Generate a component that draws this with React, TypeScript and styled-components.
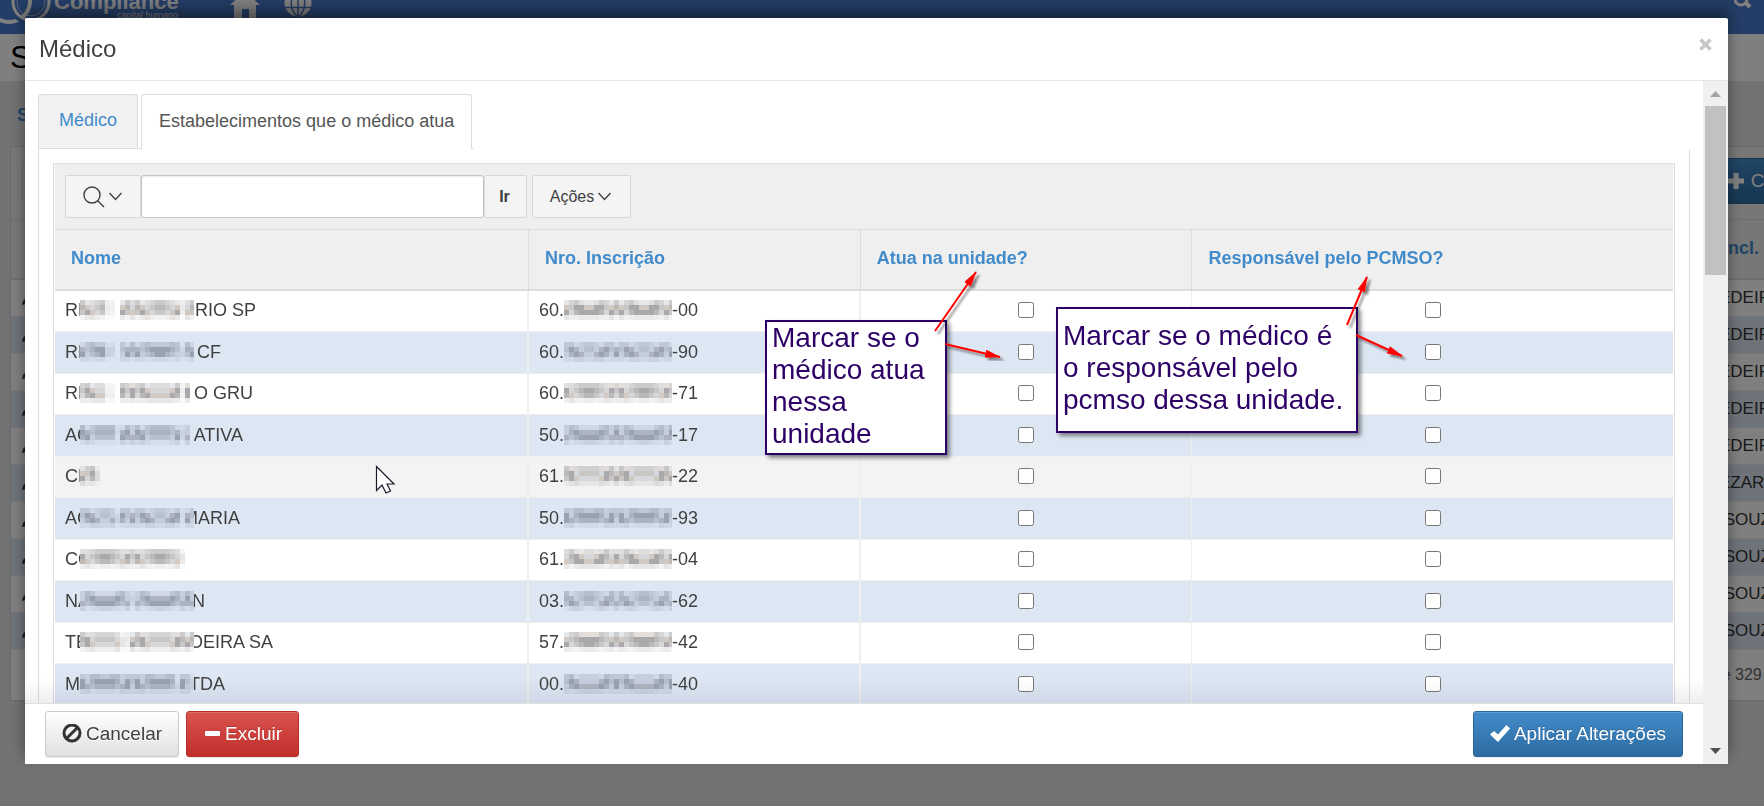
import React from "react";
import styled, { createGlobalStyle } from "styled-components";

const GlobalStyle = createGlobalStyle`
  * { box-sizing: border-box; }
  body { margin: 0; overflow: hidden; background: #e4e4e8; }
  body, button, input { font-family: "Liberation Sans", Arial, sans-serif; }
`;

const LINK = "#428bca";
const LINE = "#dddddd";

/* ---------- page behind the dialog ---------- */

const Page = styled.div`
  height: 100vh;
  overflow: hidden;
  color: #404040;
  font-size: 18px;
`;

const NavBar = styled.header`
  display: flex;
  height: 34px;
  overflow: hidden;
  background: #487acc;
  color: #fff;
`;

const Brand = styled.div`
  display: flex;
  flex-direction: column;
  width: 124px;
  margin: -7px 52px 0 2px;
  text-align: right;
`;

const BrandName = styled.span`
  font-size: 22px;
  line-height: 18px;
  font-weight: bold;
`;

const BrandTag = styled.span`
  font-size: 9px;
  line-height: 8px;
`;

const NavIcons = styled.div`
  display: flex;
  flex: 1;
  gap: 24px;
`;

const TitleStrip = styled.div`
  height: 47px;
  padding-left: 10px;
  background: #fff;
  color: #000;
  font-size: 32px;
  line-height: 46px;
`;

const Crumbs = styled.div`
  height: 65px;
  padding-left: 17px;
  color: ${LINK};
  font-weight: bold;
  line-height: 68px;
`;

const Region = styled.section`
  margin: 0 -60px 0 10px;
  border: 1px solid #d4d4d4;
  background: #fff;
`;

const RegionBar = styled.div`
  display: flex;
  align-items: center;
  justify-content: space-between;
  height: 73px;
  padding: 0 12px 4px 11px;
  background: #efefef;
  border-bottom: 1px solid ${LINE};
`;

const RegionSearch = styled.div`
  width: 70px;
  height: 42px;
  border: 1px solid #ccc;
  border-radius: 3px;
`;

const CreateButton = styled.button`
  display: flex;
  align-items: center;
  gap: 6px;
  height: 46px;
  padding: 0 18px;
  border: 1px solid #2b669a;
  background: linear-gradient(#428bca, #2d6ca2);
  color: #fff;
  font-size: 19px;
`;

const RegionTable = styled.table`
  width: 100%;
  table-layout: fixed;
  border-collapse: separate;
  border-spacing: 0;

  th {
    height: 60px;
    padding: 0 0 2px 4px;
    background: #efefef;
    border-bottom: 2px solid ${LINE};
    color: ${LINK};
    text-align: left;
  }
  td {
    height: 37px;
    padding: 0;
    border-bottom: 1px solid #efefef;
    color: #333;
    font-size: 17px;
    white-space: pre;
  }
  td svg { display: block; margin-left: 11px; }
  tbody tr:nth-child(even) td { background: #dce6f4; }
`;

const RegionFooter = styled.div`
  padding-right: 15px;
  color: #666;
  font-size: 16px;
  line-height: 50px;
  text-align: right;
`;

/* ---------- dialog ---------- */

const Overlay = styled.div`
  position: fixed;
  inset: 0;
  display: flex;
  padding: 18px 36px 42px 25px;
  background: rgba(0, 0, 0, 0.5);
`;

const Dialog = styled.div`
  display: flex;
  flex-direction: column;
  flex: 1;
  min-width: 0;
  background: #fff;
  border-radius: 2px 2px 0 0;
  box-shadow: 0 -8px 14px rgba(0, 0, 0, 0.4);
`;

const DialogHeader = styled.div`
  display: flex;
  align-items: flex-start;
  justify-content: space-between;
  height: 63px;
  padding: 16px 16px 0 14px;
  border-bottom: 1px solid #e5e5e5;
`;

const DialogTitle = styled.h2`
  margin: 0;
  font-size: 24px;
  line-height: 30px;
  font-weight: normal;
`;

const CloseButton = styled.button`
  display: flex;
  padding: 4px 0;
  border: 0;
  background: none;
`;

const DialogMain = styled.div`
  display: flex;
  flex: 1;
  min-height: 0;
`;

const DialogColumn = styled.div`
  display: flex;
  flex-direction: column;
  flex: 1;
  min-width: 0;
`;

const ScrollArea = styled.div`
  position: relative;
  display: flex;
  flex-direction: column;
  flex: 1;
  min-height: 0;
  overflow: hidden;
  padding: 13px 13px 0;

  &::after {
    content: "";
    position: absolute;
    inset: auto 0 0;
    height: 24px;
    background: linear-gradient(rgba(90, 90, 120, 0), rgba(90, 90, 120, 0.1));
  }
`;

const Tabs = styled.div`
  display: flex;
  align-items: flex-end;
  align-self: flex-start;
  gap: 3px;
  padding-right: 2px;
  border-bottom: 1px solid ${LINE};
`;

const Tab = styled.button<{ $active?: boolean }>`
  height: ${(p) => (p.$active ? 55 : 54)}px;
  margin-bottom: ${(p) => (p.$active ? -1 : 0)}px;
  padding: 0 ${(p) => (p.$active ? 17 : 20)}px 2px;
  border: 1px solid ${LINE};
  border-bottom: 0;
  border-radius: 3px 3px 0 0;
  background: ${(p) => (p.$active ? "#fff" : "#f1f1f1")};
  color: ${(p) => (p.$active ? "#555" : LINK)};
  font-size: 18px;
`;

const TabPanel = styled.div`
  flex: 1 0 auto;
  padding: 14px 14px 0;
  border: solid ${LINE};
  border-width: 0 1px;
`;

const Report = styled.div`
  padding: 0 1px;
  border: 1px solid ${LINE};
`;

const Toolbar = styled.div`
  display: flex;
  align-items: flex-start;
  height: 66px;
  padding: 11px 10px;
  background: #efefef;
  border-bottom: 1px solid ${LINE};
`;

const ToolButton = styled.button<{ $width: number; $bold?: boolean; $gap?: number }>`
  display: flex;
  align-items: center;
  justify-content: center;
  gap: 4px;
  width: ${(p) => p.$width}px;
  height: 43px;
  margin-left: ${(p) => p.$gap ?? 0}px;
  padding: 0 2px 0 0;
  border: 1px solid #d9d9d9;
  border-radius: 2px;
  background: #f4f4f4;
  color: #404040;
  font-size: 16px;
  font-weight: ${(p) => (p.$bold ? "bold" : "normal")};
`;

const SearchInput = styled.input`
  width: 343px;
  height: 43px;
  border: 1px solid #c4c4c4;
  border-radius: 3px;
  background: #fff;
  box-shadow: inset 0 1px 1px rgba(0, 0, 0, 0.08);
`;

const ReportTable = styled.table`
  width: 100%;
  table-layout: fixed;
  border-collapse: separate;
  border-spacing: 0;

  th {
    height: 61px;
    padding: 0 16px 2px;
    background: #efefef;
    border-right: 1px solid ${LINE};
    border-bottom: 2px solid ${LINE};
    color: ${LINK};
    font-weight: bold;
    text-align: left;
    white-space: nowrap;
  }
  td {
    height: 41px;
    padding: 0 10px 2px;
    border-right: 1px solid #efefef;
    border-bottom: 1px solid #efefef;
  }
  td:nth-child(-n + 2) { border-right-width: 2px; }
  th:last-child, td:last-child { border-right: 0; }
`;

const Row = styled.tr<{ $hovered?: boolean }>`
  td { background: ${(p) => (p.$hovered ? "#f3f3f3" : "#fff")}; }
  &:nth-child(even) td {
    height: 42px;
    background: #dde7f3;
  }
`;

const Masked = styled.div`
  display: flex;
  align-items: center;
  line-height: 20px;
  white-space: pre;
`;

const Clip = styled.span<{ $width: number; $end?: boolean }>`
  display: flex;
  justify-content: ${(p) => (p.$end ? "flex-end" : "flex-start")};
  width: ${(p) => p.$width}px;
  overflow: hidden;
`;

const Check = styled.input`
  display: block;
  width: 16px;
  height: 16px;
  margin: 0 auto;
`;

const DialogFooter = styled.div`
  display: flex;
  align-items: center;
  gap: 7px;
  height: 61px;
  padding: 0 20px;
  border-top: 1px solid #e0e0e0;
  background: #fff;
`;

const tones = {
  plain: "border-color:#ccc; background:linear-gradient(#fff,#e0e0e0); color:#404040; text-shadow:0 1px 0 #fff;",
  danger: "border-color:#b92c28; background:linear-gradient(#d9534f,#c12e2a); color:#fff; text-shadow:0 -1px 0 rgba(0,0,0,.2);",
  primary: "margin-left:auto; border-color:#2b669a; background:linear-gradient(#428bca,#2d6ca2); color:#fff; text-shadow:0 -1px 0 rgba(0,0,0,.2);",
};

const ActionButton = styled.button<{ $tone: keyof typeof tones }>`
  display: flex;
  align-items: center;
  gap: 4px;
  height: 46px;
  padding: 0 16px;
  border: 1px solid;
  border-radius: 3px;
  font-size: 19px;
  box-shadow: inset 0 1px 0 rgba(255, 255, 255, 0.15), 0 1px 1px rgba(0, 0, 0, 0.08);
  ${(p) => tones[p.$tone]}
`;

const ScrollTrack = styled.div`
  display: flex;
  flex-direction: column;
  align-items: center;
  width: 25px;
  padding: 10px 0;
  background: #f0f0f0;
`;

const ScrollThumb = styled.div`
  width: 21px;
  height: 169px;
  margin: 9px 0 auto;
  background: #c1c1c1;
`;

/* ---------- notes laid over the page ---------- */

const Note = styled.p<{ $x: number; $y: number; $w: number; $h: number; $top: number }>`
  position: absolute;
  left: ${(p) => p.$x}px;
  top: ${(p) => p.$y}px;
  width: ${(p) => p.$w}px;
  height: ${(p) => p.$h}px;
  margin: 0;
  padding: ${(p) => p.$top}px 0 0 5px;
  border: 2px solid #2c0066;
  background: #fff;
  box-shadow: 3px 3px 4px rgba(0, 0, 0, 0.45);
  color: #2c0066;
  font-size: 28px;
  line-height: 32px;
  white-space: pre-line;
`;

const Drawing = styled.svg`
  position: absolute;
  left: 0;
  top: 0;
  pointer-events: none;
`;

/* ---------- icons ---------- */

const Logo = () => (
  <svg width="52" height="34" fill="none" stroke="#fff">
    <circle cx="9" cy="1" r="21" strokeWidth="4" />
    <circle cx="31" cy="2" r="21" stroke="#487acc" strokeWidth="4" />
    <circle cx="31" cy="2" r="18" strokeWidth="3" />
    <circle cx="31" cy="2" r="14" strokeWidth="1" opacity=".6" />
  </svg>
);

const HomeIcon = () => (
  <svg width="30" height="34" fill="#fff">
    <path d="M15-9L30 5H26V18H19V9H12V18H4V5H0Z" />
  </svg>
);

const GlobeIcon = () => (
  <svg width="28" height="34">
    <circle cx="14" cy="3" r="13.5" fill="#fff" />
    <path d="M0 7.500H28M0-1H28M14-10V17M14-10C5-4 5 10 14 17M14-10C23-4 23 10 14 17" fill="none" stroke="#487acc" strokeWidth="1.500" />
  </svg>
);

const GlassIcon = () => (
  <svg width="30" height="34" fill="none" stroke="#fff">
    <circle cx="7" cy="-1" r="6" strokeWidth="3" />
    <path d="M11 2L16 7" strokeWidth="4" />
  </svg>
);

const PlusIcon = () => (
  <svg width="18" height="18" fill="#fff">
    <path d="M6.500 1h5v5.500H17v5h-5.500V17h-5v-5.500H1v-5h5.500Z" />
  </svg>
);

const PencilIcon = () => (
  <svg width="14" height="14">
    <path d="M0 14L1 10L10 0L14 4L4 13Z" fill="#333" />
  </svg>
);

const CloseIcon = () => (
  <svg width="13" height="13" stroke="#c8c8c8" strokeWidth="3.600">
    <path d="M1.500 1.500L11.500 11.500M11.500 1.500L1.500 11.500" />
  </svg>
);

const SearchIcon = () => (
  <svg width="22" height="22" fill="none" stroke="#404040" strokeWidth="1.400">
    <circle cx="9" cy="9" r="8" />
    <path d="M14.700 14.700L21 21" />
  </svg>
);

const Chevron = () => (
  <svg width="13" height="9" fill="none" stroke="#404040" strokeWidth="1.400">
    <path d="M.5 1L6.500 7.500L12.500 1" />
  </svg>
);

const BanIcon = () => (
  <svg width="20" height="20" fill="none" stroke="#333" strokeWidth="3">
    <circle cx="10" cy="9" r="8" />
    <path d="M15.500 3.500L4.500 14.500" />
  </svg>
);

const MinusIcon = () => (
  <svg width="18" height="18" fill="#fff">
    <rect x="2" y="6" width="15" height="5" rx="1" />
  </svg>
);

const CheckIcon = () => (
  <svg width="20" height="18" fill="#fff">
    <path d="M0 9.500L4 6L8 9.500L16.500 0L20 3.500L8 17Z" />
  </svg>
);

const ScrollArrow = ({ down }: { down?: boolean }) => (
  <svg width="11" height="6" fill={down ? "#505050" : "#a3a3a3"}>
    <path d={down ? "M0 0H11L5.500 6Z" : "M0 6H11L5.500 0Z"} />
  </svg>
);

/* Pixelated cover over private text: "#" full, "." faint, " " nothing. */
const Mosaic = ({ shape, seed, tint, width }: { shape: string; seed: number; tint: boolean; width: number }) => {
  const palette = tint
    ? ["#98a2b1", "#a9b3c1", "#b7c1cf", "#c4cede", "#adb4bf"]
    : ["#a9a9ab", "#bbb9b8", "#c9c7c6", "#d6d7da", "#d2c9c3"];
  return (
    <svg width={width} height="20" shapeRendering="crispEdges">
      {shape.split("").flatMap((mark, col) =>
        [0, 1, 2, 3].map((line) => {
          if (mark === " ") return null;
          const n = (seed * 31 + col * 17 + line * 23 + col * col * 3) % 11;
          const base = line === 3 ? 0.3 : line === 0 ? 0.6 : 1;
          return (
            <rect
              key={`${col}-${line}`}
              x={col * 5}
              y={line * 5}
              width="5"
              height="5"
              fill={palette[n % 5]}
              opacity={mark === "." ? base * 0.3 : base}
            />
          );
        })
      )}
    </svg>
  );
};

/* ---------- data ---------- */

interface Unit {
  start: string;
  cover: string;
  end: string;
  endWidth: number;
  code: string;
  digit: string;
}

const units: Unit[] = [
  { start: "RM", cover: "#####.. ############.##", end: "ORIO SP", endWidth: 62, code: "60.", digit: "-00" },
  { start: "RM", cover: "#####.. ############.##", end: "CF", endWidth: 27, code: "60.", digit: "-90" },
  { start: "RM", cover: "#####.. ############.# ", end: "TO GRU", endWidth: 59, code: "60.", digit: "-71" },
  { start: "AC", cover: "#######.############.# ", end: "ATIVA", endWidth: 49, code: "50.", digit: "-17" },
  { start: "CB", cover: "###.                   ", end: "", endWidth: 0, code: "61.", digit: "-22" },
  { start: "AC", cover: "#######.############.##", end: "MARIA", endWidth: 46, code: "50.", digit: "-93" },
  { start: "CO", cover: "####################.  ", end: "", endWidth: 0, code: "61.", digit: "-04" },
  { start: "NA", cover: "##########.############", end: "N", endWidth: 11, code: "03.", digit: "-62" },
  { start: "TE", cover: "########..#############", end: "OEIRA SA", endWidth: 79, code: "57.", digit: "-42" },
  { start: "MA", cover: "###################.##.", end: "TDA", endWidth: 31, code: "00.", digit: "-40" },
];

const peeked = ["EDEIR", "EDEIR", "EDEIR", "EDEIR", "EDEIR", "EZAR", " SOUZ", " SOUZ", " SOUZ", " SOUZ"];

const arrows = [
  { x1: 935, y1: 331, x2: 976, y2: 272 },
  { x1: 945, y1: 344, x2: 1000, y2: 357 },
  { x1: 1347, y1: 325, x2: 1367, y2: 277 },
  { x1: 1356, y1: 335, x2: 1402, y2: 356 },
];

const BackgroundPage = () => (
  <>
    <NavBar>
      <Logo />
      <Brand>
        <BrandName>Compliance</BrandName>
        <BrandTag>capital humano</BrandTag>
      </Brand>
      <NavIcons>
        <HomeIcon />
        <GlobeIcon />
      </NavIcons>
      <GlassIcon />
    </NavBar>
    <TitleStrip>S</TitleStrip>
    <Crumbs>S</Crumbs>
    <Region>
      <RegionBar>
        <RegionSearch />
        <CreateButton type="button">
          <PlusIcon />
          Criar
        </CreateButton>
      </RegionBar>
      <RegionTable>
        <colgroup>
          <col />
          <col width="104" />
        </colgroup>
        <thead>
          <tr>
            <th aria-label="Editar" />
            <th>Incl.</th>
          </tr>
        </thead>
        <tbody>
          {peeked.map((text, i) => (
            <tr key={i}>
              <td>
                <PencilIcon />
              </td>
              <td>{text}</td>
            </tr>
          ))}
        </tbody>
      </RegionTable>
      <RegionFooter>1 - 10 de 329 linhas</RegionFooter>
    </Region>
  </>
);

export default function App() {
  return (
    <Page>
      <GlobalStyle />
      <BackgroundPage />
      <Overlay>
        <Dialog role="dialog" aria-labelledby="dialog-title">
          <DialogHeader>
            <DialogTitle id="dialog-title">Médico</DialogTitle>
            <CloseButton type="button" aria-label="Fechar">
              <CloseIcon />
            </CloseButton>
          </DialogHeader>
          <DialogMain>
            <DialogColumn>
              <ScrollArea>
                <Tabs role="tablist">
                  <Tab type="button" role="tab">Médico</Tab>
                  <Tab type="button" role="tab" aria-selected $active>
                    Estabelecimentos que o médico atua
                  </Tab>
                </Tabs>
                <TabPanel role="tabpanel">
                  <Report>
                    <Toolbar>
                      <ToolButton type="button" $width={76} aria-label="Colunas de pesquisa">
                        <SearchIcon />
                        <Chevron />
                      </ToolButton>
                      <SearchInput type="text" aria-label="Pesquisar" />
                      <ToolButton type="button" $width={43} $bold>Ir</ToolButton>
                      <ToolButton type="button" $width={99} $gap={5}>
                        Ações
                        <Chevron />
                      </ToolButton>
                    </Toolbar>
                    <ReportTable>
                      <colgroup>
                        <col width="29.3%" />
                        <col width="20.5%" />
                        <col width="20.5%" />
                        <col />
                      </colgroup>
                      <thead>
                        <tr>
                          <th>Nome</th>
                          <th>Nro. Inscrição</th>
                          <th>Atua na unidade?</th>
                          <th>Responsável pelo PCMSO?</th>
                        </tr>
                      </thead>
                      <tbody>
                        {units.map((unit, i) => (
                          <Row key={i} $hovered={i === 4}>
                            <td>
                              <Masked>
                                <Clip $width={15}>{unit.start}</Clip>
                                <Mosaic shape={unit.cover} seed={i + 3} tint={i % 2 === 1} width={114} />
                                <Clip $width={unit.endWidth} $end>{unit.end}</Clip>
                              </Masked>
                            </td>
                            <td>
                              <Masked>
                                <Clip $width={25}>{unit.code}</Clip>
                                <Mosaic shape="######################" seed={i + 7} tint={i % 2 === 1} width={108} />
                                {unit.digit}
                              </Masked>
                            </td>
                            <td>
                              <Check type="checkbox" aria-label="Atua na unidade?" />
                            </td>
                            <td>
                              <Check type="checkbox" aria-label="Responsável pelo PCMSO?" />
                            </td>
                          </Row>
                        ))}
                      </tbody>
                    </ReportTable>
                  </Report>
                </TabPanel>
              </ScrollArea>
              <DialogFooter>
                <ActionButton type="button" $tone="plain">
                  <BanIcon />
                  Cancelar
                </ActionButton>
                <ActionButton type="button" $tone="danger">
                  <MinusIcon />
                  Excluir
                </ActionButton>
                <ActionButton type="button" $tone="primary">
                  <CheckIcon />
                  Aplicar Alterações
                </ActionButton>
              </DialogFooter>
            </DialogColumn>
            <ScrollTrack>
              <ScrollArrow />
              <ScrollThumb />
              <ScrollArrow down />
            </ScrollTrack>
          </DialogMain>
        </Dialog>
        <Note $x={765} $y={320} $w={182} $h={135} $top={0}>
          {"Marcar se o\nmédico atua\nnessa\nunidade"}
        </Note>
        <Note $x={1056} $y={307} $w={302} $h={126} $top={11}>
          {"Marcar se o médico é\no responsável pelo\npcmso dessa unidade."}
        </Note>
        <Drawing width="1440" height="520">
          <defs>
            <marker id="tip" markerWidth="17" markerHeight="8" refX="15" refY="4" orient="auto" markerUnits="userSpaceOnUse">
              <path d="M0 0L16 4L0 8Z" fill="#f00" />
            </marker>
            <filter id="drop" x="-20%" y="-20%" width="150%" height="150%">
              <feDropShadow dx="3" dy="3" stdDeviation="1" floodOpacity=".45" />
            </filter>
          </defs>
          {arrows.map((a) => (
            <g key={a.x1} filter="url(#drop)">
              <line {...a} stroke="#f00" strokeWidth="2" markerEnd="url(#tip)" />
            </g>
          ))}
          <path
            d="M376.500 466.500V490.500L382 485L386 493L390.500 491L387 484H394Z"
            fill="#fff"
            stroke="#1a1a2a"
            strokeWidth="1.200"
          />
        </Drawing>
      </Overlay>
    </Page>
  );
}
